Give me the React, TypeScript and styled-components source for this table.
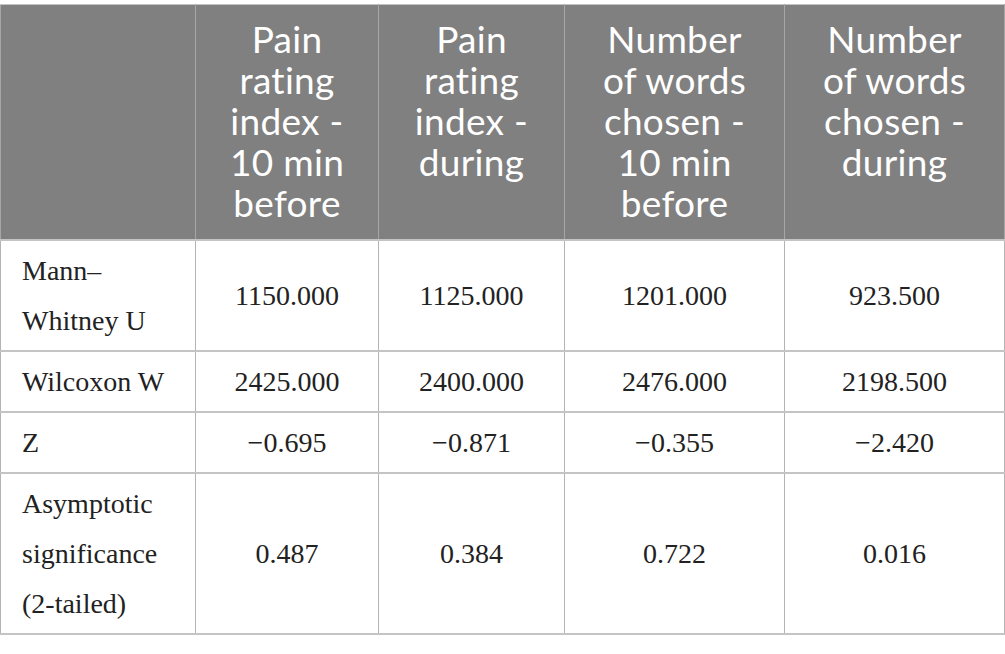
import React from "react";
import styled, { createGlobalStyle } from "styled-components";

const GlobalStyle = createGlobalStyle`
	html, body {
		margin: 0;
		padding: 0;
		background: #fff;
	}
`;

type Row = {
	label: string[];
	values: string[];
};

const headers: string[][] = [
	["Pain", "rating", "index -", "10 min", "before"],
	["Pain", "rating", "index -", "during"],
	["Number", "of words", "chosen -", "10 min", "before"],
	["Number", "of words", "chosen -", "during"],
];

const rows: Row[] = [
	{ label: ["Mann–", "Whitney U"], values: ["1150.000", "1125.000", "1201.000", "923.500"] },
	{ label: ["Wilcoxon W"], values: ["2425.000", "2400.000", "2476.000", "2198.500"] },
	{ label: ["Z"], values: ["−0.695", "−0.871", "−0.355", "−2.420"] },
	{ label: ["Asymptotic", "significance", "(2-tailed)"], values: ["0.487", "0.384", "0.722", "0.016"] },
];

const colWidths = [195, 183, 186, 220, 220];

export default function App() {
	return (
		<>
			<GlobalStyle />
			<Page>
				<Table>
					<colgroup>
						{colWidths.map((w, i) => (
							<col key={i} style={{ width: w }} />
						))}
					</colgroup>
					<thead>
						<tr>
							<HeadCell />
							{headers.map((lines, i) => (
								<HeadCell key={i}>
									{lines.map((l, j) => (
										<Line key={j}>{l}</Line>
									))}
								</HeadCell>
							))}
						</tr>
					</thead>
					<tbody>
						{rows.map((row, i) => (
							<tr key={i}>
								<LabelCell>
									{row.label.map((l, j) => (
										<Line key={j}>{l}</Line>
									))}
								</LabelCell>
								{row.values.map((v, j) => (
									<ValueCell key={j}>{v}</ValueCell>
								))}
							</tr>
						))}
					</tbody>
				</Table>
			</Page>
		</>
	);
}

const Page = styled.div`
	padding-top: 4px;
	width: 1005px;
`;

const Table = styled.table`
	width: 1005px;
	table-layout: fixed;
	border-collapse: collapse;
	border: 1px solid #c4c4c4;
`;

const HeadCell = styled.th`
	background-color: #7f807f;
	color: #fff;
	font-family: Lato, "Open Sans", sans-serif;
	font-weight: 400;
	font-size: 37px;
	letter-spacing: 0.3px;
	font-variant-ligatures: none;
	line-height: 41px;
	text-align: center;
	vertical-align: top;
	padding: 13px 2px 16px;
	border: 1px solid #a6a6a6;
	border-top-color: #c4c4c4;
	border-bottom-color: #c4c4c4;
`;

const Line = styled.span`
	display: block;
	white-space: nowrap;
`;

const BodyCell = styled.td`
	font-family: "Liberation Serif", "Times New Roman", serif;
	font-size: 28px;
	line-height: 50px;
	color: #222;
	padding: 5px 10px 4px;
	border: 2px solid #c4c4c4;
	border-left-width: 1px;
	border-right-width: 1px;
	border-left-color: #b4b4b4;
	border-right-color: #b4b4b4;
	vertical-align: middle;
`;

const LabelCell = styled(BodyCell)`
	text-align: left;
	padding-left: 21px;
`;

const ValueCell = styled(BodyCell)`
	text-align: center;
`;
